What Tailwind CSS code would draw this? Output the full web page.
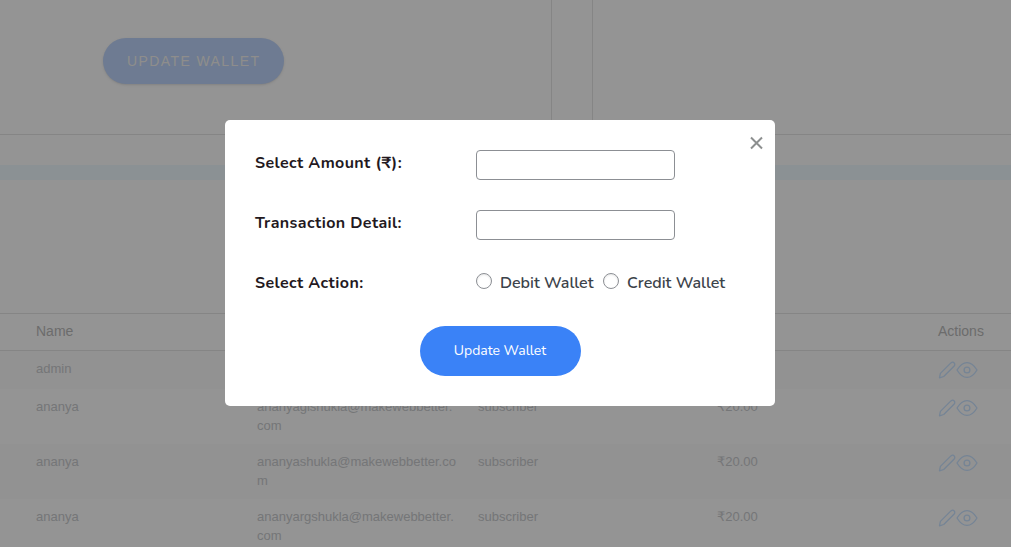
<!DOCTYPE html>
<html lang="en">
<head>
<meta charset="utf-8">
<meta name="viewport" content="width=device-width, initial-scale=1">
<title>Wallet</title>
<script src="https://cdn.jsdelivr.net/npm/@tailwindcss/browser@4"></script>
</head>
<body class="h-screen overflow-hidden bg-[#f7f7f7] font-['Liberation_Sans',Arial,'DejaVu_Sans',sans-serif]">
<svg class="hidden" aria-hidden="true">
  <symbol id="pencil" viewBox="0 0 18 18"><path d="M1.5 16.8 L2.4 12.4 L12.9 1.9 Q14.2 .9 15.4 1.3 L16.6 2.4 Q17.2 3.8 16.2 5 L5.7 15.5 Z" fill="none" stroke="currentColor" stroke-width="1.3" stroke-linejoin="round"/></symbol>
  <symbol id="eye" viewBox="0 0 22 18"><path d="M1 9 Q5.5 1.6 11 1.6 Q16.5 1.6 21 9 Q16.5 16.4 11 16.4 Q5.5 16.4 1 9 Z" fill="none" stroke="currentColor" stroke-width="1.3" stroke-linejoin="round"/><circle cx="11" cy="9" r="2.9" fill="none" stroke="currentColor" stroke-width="1.3"/></symbol>
</svg>

<main>
  <section class="grid h-[135px] grid-cols-[552fr_40fr_419fr] border-b border-[#dedede]">
    <div class="border-r border-[#dedede] pt-[38px] pl-[103px]">
      <button type="button" class="h-[46px] rounded-full bg-[#b7cdf3] px-6 text-sm tracking-widest text-[#edece9] shadow">UPDATE WALLET</button>
    </div>
    <div></div>
    <div class="border-l border-[#dedede]"></div>
  </section>
  <div class="mt-[30px] h-[15px] bg-[#e8f2f7]"></div>

  <table class="mt-[133px] w-full table-fixed border-t border-[#dedede] text-left text-[13px] leading-[19px] text-[#c3c5c8]">
    <colgroup><col class="w-[247px]"><col class="w-[221px]"><col class="w-[239px]"><col class="w-[221px]"><col></colgroup>
    <thead>
      <tr class="h-[37px] border-b border-[#dedede] text-sm text-[#b4b4b4]">
        <th scope="col" class="pb-[2px] pl-9 font-normal">Name</th><td></td><td></td><td></td><th scope="col" class="pb-[2px] pl-[10px] font-normal">Actions</th>
      </tr>
    </thead>
    <tbody class="align-top">
      <tr class="h-[38px] bg-[#f3f3f3]">
        <td class="py-2 pl-9">admin</td><td></td><td></td><td></td>
        <td class="pt-[10px] pl-[10px]"><div class="flex text-[#c3dcf8]"><a href="#" aria-label="Edit"><svg class="h-[18px] w-[18px]"><use href="#pencil"/></svg></a><a href="#" aria-label="View"><svg class="h-[18px] w-[22px]"><use href="#eye"/></svg></a></div></td>
      </tr>
      <tr class="h-[55px]">
        <td class="py-2 pl-9">ananya</td><td class="px-[10px] py-2 break-all">ananyagishukla@makewebbetter.com</td><td class="px-[10px] py-2">subscriber</td><td class="px-[10px] py-2">₹20.00</td>
        <td class="pt-[10px] pl-[10px]"><div class="flex text-[#c3dcf8]"><a href="#" aria-label="Edit"><svg class="h-[18px] w-[18px]"><use href="#pencil"/></svg></a><a href="#" aria-label="View"><svg class="h-[18px] w-[22px]"><use href="#eye"/></svg></a></div></td>
      </tr>
      <tr class="h-[55px] bg-[#f3f3f3]">
        <td class="py-2 pl-9">ananya</td><td class="px-[10px] py-2 break-all">ananyashukla@makewebbetter.com</td><td class="px-[10px] py-2">subscriber</td><td class="px-[10px] py-2">₹20.00</td>
        <td class="pt-[10px] pl-[10px]"><div class="flex text-[#c3dcf8]"><a href="#" aria-label="Edit"><svg class="h-[18px] w-[18px]"><use href="#pencil"/></svg></a><a href="#" aria-label="View"><svg class="h-[18px] w-[22px]"><use href="#eye"/></svg></a></div></td>
      </tr>
      <tr class="h-[55px]">
        <td class="py-2 pl-9">ananya</td><td class="px-[10px] py-2 break-all">ananyargshukla@makewebbetter.com</td><td class="px-[10px] py-2">subscriber</td><td class="px-[10px] py-2">₹20.00</td>
        <td class="pt-[10px] pl-[10px]"><div class="flex text-[#c3dcf8]"><a href="#" aria-label="Edit"><svg class="h-[18px] w-[18px]"><use href="#pencil"/></svg></a><a href="#" aria-label="View"><svg class="h-[18px] w-[22px]"><use href="#eye"/></svg></a></div></td>
      </tr>
    </tbody>
  </table>
</main>

<div class="fixed inset-0 flex items-start justify-center bg-black/40 pt-[120px] pr-[11px]">
  <form role="dialog" class="relative w-[550px] rounded-[5px] bg-white p-[30px] font-[Nunito,'Open_Sans',sans-serif] text-base text-[#3c434a]">
    <button type="button" aria-label="Close" class="absolute top-4 right-3 text-[#8c8f8f]">
      <svg class="block h-[14px] w-[13px]" viewBox="0 0 13 14" fill="none" stroke="currentColor" stroke-width="2"><path d="M1 1.5 12 12.5M12 1.5 1 12.5"/></svg>
    </button>
    <div class="grid grid-cols-[221px_1fr] gap-y-[30px]">
      <label for="amount" class="leading-[26px] font-bold tracking-wide text-[#23191e]">Select Amount (₹):</label>
      <input id="amount" type="text" class="h-[30px] w-[199px] rounded-[4px] border border-[#8c8f94] bg-white px-2">
      <label for="detail" class="leading-[26px] font-bold tracking-wide text-[#23191e]">Transaction Detail:</label>
      <input id="detail" type="text" class="h-[30px] w-[199px] rounded-[4px] border border-[#8c8f94] bg-white px-2">
      <span id="action" class="leading-[26px] font-bold tracking-wide text-[#23191e]">Select Action:</span>
      <div role="radiogroup" aria-labelledby="action" class="flex h-[26px] items-start leading-[26px] font-semibold whitespace-nowrap">
        <label class="flex w-[127px] gap-2"><input type="radio" name="action" class="mt-[3px] h-4 w-4 shrink-0 appearance-none rounded-full border border-[#8c8f94] bg-white shadow-[inset_0_1px_2px_rgba(0,0,0,0.1)]">Debit Wallet</label>
        <label class="flex gap-2"><input type="radio" name="action" class="mt-[3px] h-4 w-4 shrink-0 appearance-none rounded-full border border-[#8c8f94] bg-white shadow-[inset_0_1px_2px_rgba(0,0,0,0.1)]">Credit Wallet</label>
      </div>
    </div>
    <button type="submit" class="mx-auto mt-[30px] block h-[50px] w-[161px] rounded-full bg-[#3a82f7] text-sm text-white">Update Wallet</button>
  </form>
</div>
</body>
</html>
